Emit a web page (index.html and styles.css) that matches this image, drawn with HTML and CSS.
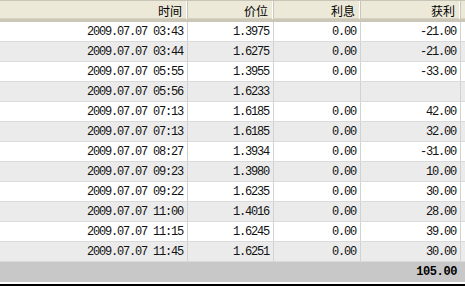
FILE: index.html
```html
<!DOCTYPE html>
<html>
<head>
<meta charset="utf-8">
<link rel="stylesheet" href="styles.css">
</head>
<body>
<div class="grid">
  <div class="row head">
    <div class="c c1">时间</div><div class="c c2">价位</div><div class="c c3">利息</div><div class="c c4">获利</div><div class="c c5"></div>
  </div>
  <div class="row"><div class="c c1 n">2009.07.07 03:43</div><div class="c c2 n">1.3975</div><div class="c c3 n">0.00</div><div class="c c4 n">-21.00</div><div class="c c5"></div></div>
  <div class="row alt"><div class="c c1 n">2009.07.07 03:44</div><div class="c c2 n">1.6275</div><div class="c c3 n">0.00</div><div class="c c4 n">-21.00</div><div class="c c5"></div></div>
  <div class="row"><div class="c c1 n">2009.07.07 05:55</div><div class="c c2 n">1.3955</div><div class="c c3 n">0.00</div><div class="c c4 n">-33.00</div><div class="c c5"></div></div>
  <div class="row alt"><div class="c c1 n">2009.07.07 05:56</div><div class="c c2 n">1.6233</div><div class="c c3 n"></div><div class="c c4 n"></div><div class="c c5"></div></div>
  <div class="row"><div class="c c1 n">2009.07.07 07:13</div><div class="c c2 n">1.6185</div><div class="c c3 n">0.00</div><div class="c c4 n">42.00</div><div class="c c5"></div></div>
  <div class="row alt"><div class="c c1 n">2009.07.07 07:13</div><div class="c c2 n">1.6185</div><div class="c c3 n">0.00</div><div class="c c4 n">32.00</div><div class="c c5"></div></div>
  <div class="row"><div class="c c1 n">2009.07.07 08:27</div><div class="c c2 n">1.3934</div><div class="c c3 n">0.00</div><div class="c c4 n">-31.00</div><div class="c c5"></div></div>
  <div class="row alt"><div class="c c1 n">2009.07.07 09:23</div><div class="c c2 n">1.3980</div><div class="c c3 n">0.00</div><div class="c c4 n">10.00</div><div class="c c5"></div></div>
  <div class="row"><div class="c c1 n">2009.07.07 09:22</div><div class="c c2 n">1.6235</div><div class="c c3 n">0.00</div><div class="c c4 n">30.00</div><div class="c c5"></div></div>
  <div class="row alt"><div class="c c1 n">2009.07.07 11:00</div><div class="c c2 n">1.4016</div><div class="c c3 n">0.00</div><div class="c c4 n">28.00</div><div class="c c5"></div></div>
  <div class="row"><div class="c c1 n">2009.07.07 11:15</div><div class="c c2 n">1.6245</div><div class="c c3 n">0.00</div><div class="c c4 n">39.00</div><div class="c c5"></div></div>
  <div class="row alt"><div class="c c1 n">2009.07.07 11:45</div><div class="c c2 n">1.6251</div><div class="c c3 n">0.00</div><div class="c c4 n">30.00</div><div class="c c5"></div></div>
  <div class="foot"><span class="total">105.00</span></div>
  <div class="bottom"></div>
</div>
</body>
</html>
```
FILE: styles.css
```css
html, body {
  margin: 0;
  padding: 0;
  background: #ffffff;
}
.grid {
  width: 465px;
  height: 286px;
  display: flex;
  flex-direction: column;
  overflow: hidden;
}
.row {
  display: grid;
  grid-template-columns: 188px 86px 87px 100px 4px;
  height: 20px;
  box-sizing: border-box;
  border-bottom: 1px solid #dadada;
  background: #ffffff;
}
.row.alt {
  background: #ebebeb;
}
.c {
  box-sizing: border-box;
  display: flex;
  align-items: center;
  justify-content: flex-end;
  padding-right: 3px;
  border-right: 1px solid #d2d2d2;
  color: #111;
}
.c5 {
  border-right: none;
}
.n {
  font-family: "Liberation Mono", "DejaVu Sans Mono", monospace;
  font-size: 12px;
  letter-spacing: -1.2px;
  padding-right: 4px;
}
.head {
  height: 22px;
  background: #ece9d8;
  border-top: 1px solid #c9c5b6;
  border-bottom: 3px solid #cbc7b8;
  box-shadow: inset 0 -1px 0 #d6d2c2;
}
.head .c {
  font-family: "Noto Sans CJK SC", sans-serif;
  font-size: 12px;
  color: #000;
  padding-right: 5px;
  border-right: 1px solid #cbc7b8;
  box-shadow: inset -1px 0 0 #ffffff;
}
.head .c5 {
  border-right: none;
  box-shadow: none;
}
.foot {
  height: 20px;
  background: #c8c8c8;
  display: flex;
  align-items: center;
  justify-content: flex-end;
  padding-right: 8px;
  box-sizing: border-box;
}
.total {
  font-family: "Liberation Mono", "DejaVu Sans Mono", monospace;
  font-size: 12px;
  font-weight: bold;
  letter-spacing: -0.4px;
  color: #000;
}
.bottom {
  height: 2px;
  margin-top: 2px;
  background: #000;
}
```
